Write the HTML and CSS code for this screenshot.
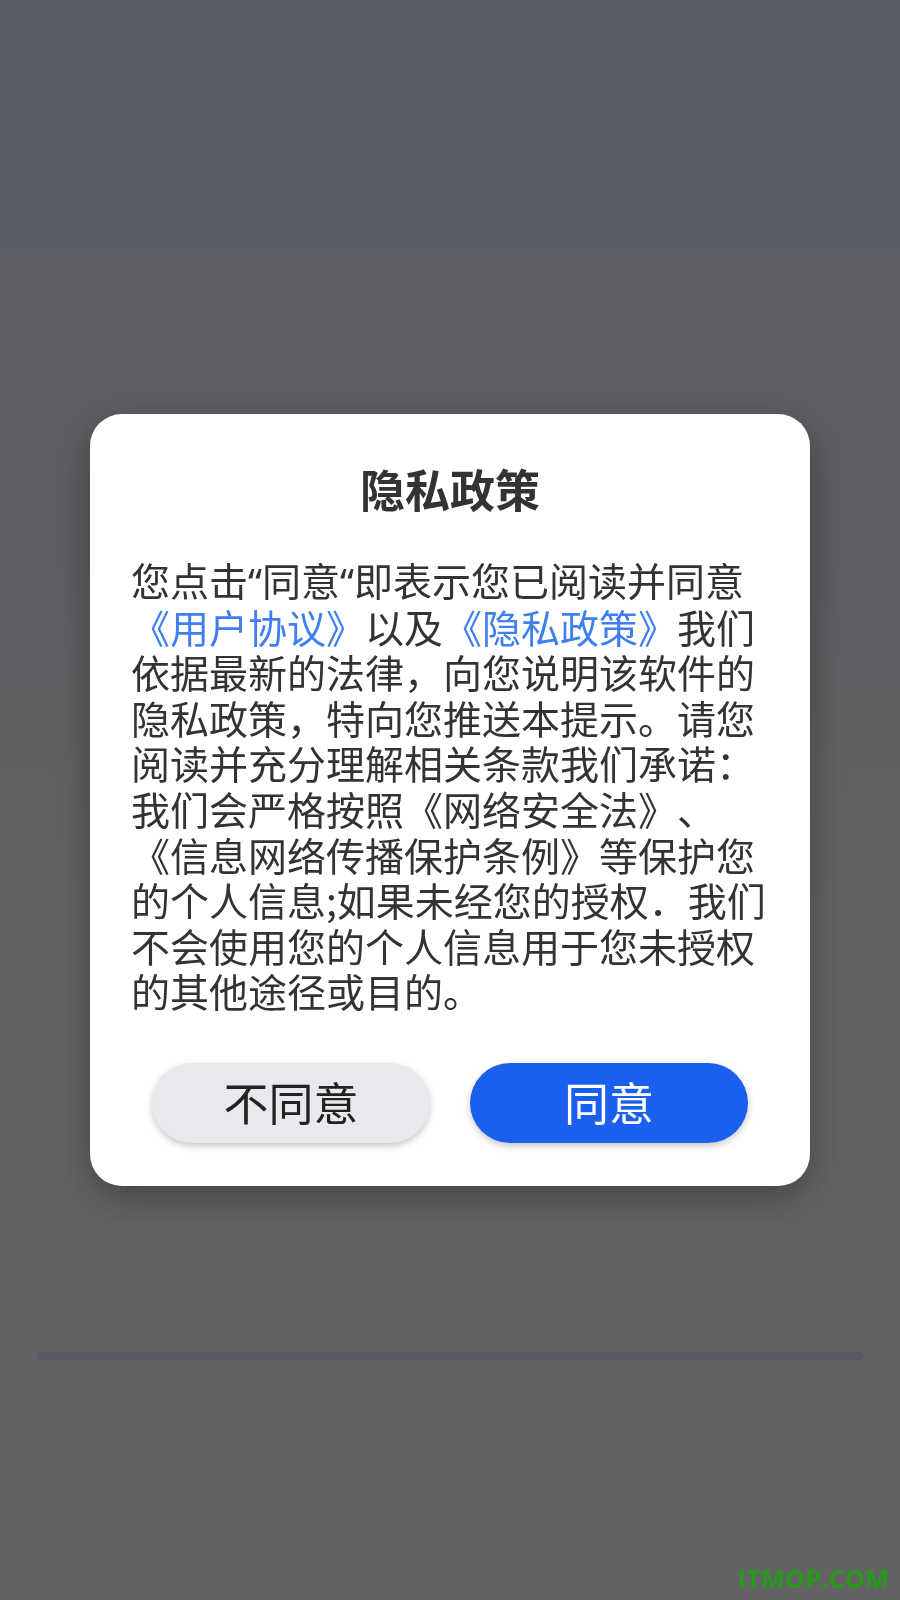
FILE: index.html
```html
<!DOCTYPE html>
<html lang="zh-CN">
<head>
<meta charset="utf-8">
<title>隐私政策</title>
<link rel="stylesheet" href="styles.css">
</head>
<body>
<div class="page">
  <div class="header"></div>
  <div class="content">
    <div class="track"></div>
  </div>
</div>
<div class="overlay">
  <div class="dialog">
    <h1 class="title">隐私政策</h1>
    <p class="text">您点击<span class="q">“</span>同意<span class="q">“</span>即表示您已阅读并同意<span class="link">《用户协议》</span>以及<span class="link">《隐私政策》</span>我们依据最新的法律，向您说明该软件的隐私政策，特向您推送本提示。请您阅读并充分理解相关条款我们承诺：我们会严格按照《网络安全法》、《信息网络传播保护条例》等保护您的个人信息;如果未经您的授权．我们不会使用您的个人信息用于您未授权的其他途径或目的。</p>
    <div class="actions">
      <button class="btn btn-cancel">不同意</button>
      <button class="btn btn-ok">同意</button>
    </div>
  </div>
</div>
<div class="watermark">ITMOP.COM</div>
</body>
</html>
```

FILE: styles.css
```css
* { box-sizing: border-box; }
html, body {
  margin: 0;
  padding: 0;
  width: 900px;
  height: 1600px;
  overflow: hidden;
  font-family: "Noto Sans CJK SC", "Noto Sans", sans-serif;
}
.page {
  width: 900px;
  height: 1600px;
  display: flex;
  flex-direction: column;
  background: #f8f8f8;
}
.header {
  height: 255px;
  background: #e4e8fd;
}
.content {
  flex: 1;
  background: linear-gradient(#e9ebf7 0px, #e9ebf6 300px, #f8f8f8 650px, #f8f8f8 100%);
  padding: 1097px 36px 0 37px;
}
.track {
  height: 8px;
  border-radius: 4px;
  background: #d9dff9;
}
.overlay {
  position: fixed;
  inset: 0;
  background: rgba(0, 0, 0, 0.6);
  display: flex;
  align-items: center;
  justify-content: center;
}
.dialog {
  width: 720px;
  height: 772px;
  background: #ffffff;
  border-radius: 32px;
  padding: 48px 41px 42px 41px;
  box-shadow: 0 12px 40px rgba(0, 0, 0, 0.35);
  display: flex;
  flex-direction: column;
}
.title {
  margin: 0;
  font-size: 45px;
  line-height: 54px;
  font-weight: 700;
  color: #333333;
  text-align: center;
}
.text {
  margin: 41px 0 0 0;
  font-size: 39px;
  line-height: 45.6px;
  color: #333333;
  height: 463px;
  text-spacing-trim: space-all;
}
.q {
  font-family: "Noto Sans", sans-serif;
}
.link {
  display: inline-block;
  height: 45.6px;
  color: #3f7ff0;
}
.actions {
  margin-top: 43px;
  display: flex;
  justify-content: center;
  gap: 40px;
}
.btn {
  width: 278px;
  height: 80px;
  flex: none;
  border: none;
  border-radius: 40px;
  font-family: "Noto Sans CJK SC", sans-serif;
  font-size: 45px;
  line-height: 1;
  padding: 0 0 4px 0;
  display: flex;
  align-items: center;
  justify-content: center;
  box-shadow: 0 3px 7px rgba(0, 0, 0, 0.22);
}
.btn-cancel {
  background: #e8e9ec;
  color: #222222;
}
.btn-ok {
  background: #1b5fef;
  color: #ffffff;
}
.watermark {
  position: fixed;
  right: 11px;
  bottom: 9px;
  font-family: "Open Sans", sans-serif;
  font-weight: 700;
  font-size: 25.5px;
  line-height: 1;
  color: #279a1c;
}
```
